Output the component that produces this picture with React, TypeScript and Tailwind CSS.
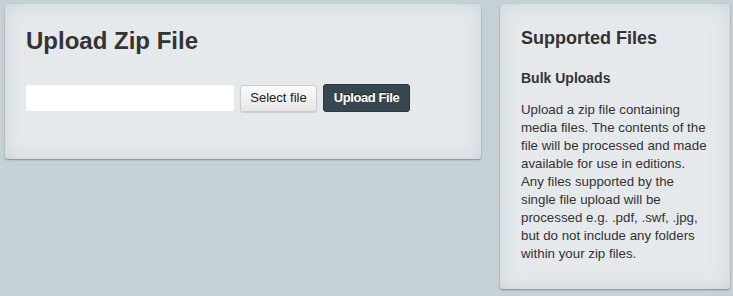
import React from "react";

export default function App() {
  const lines = [
    "Upload a zip file containing",
    "media files. The contents of the",
    "file will be processed and made",
    "available for use in editions.",
    "Any files supported by the",
    "single file upload will be",
    "processed e.g. .pdf, .swf, .jpg,",
    "but do not include any folders",
    "within your zip files.",
  ];
  return (
    <div
      className="w-[733px] h-[296px] bg-[#c5d0d7] flex items-start gap-[19px] pl-[5px] pt-[4px] text-[#333]"
      style={{ fontFamily: '"Liberation Sans", Arial, sans-serif' }}
    >
      <div className="w-[476px] h-[155px] rounded-[3px] bg-[#e5e9ec] shadow-[0_1px_2px_rgba(0,0,0,0.35),inset_0_0_18px_rgba(160,172,180,0.35)] pl-[21px] pt-[22px]">
        <h1 className="text-[24px] leading-[30px] font-bold">Upload Zip File</h1>
        <div className="flex items-center mt-[28px] gap-[6px]">
          <div className="w-[208px] h-[26px] bg-white rounded-[2px]" />
          <button className="w-[77px] h-[27px] rounded-[3px] border border-[#c9cccf] bg-gradient-to-b from-[#fbfbfb] to-[#e6e6e6] text-[13px] text-[#222] shadow-[0_1px_1px_rgba(0,0,0,0.12)]">
            Select file
          </button>
          <button className="w-[87px] h-[28px] rounded-[3px] bg-[#36474f] border border-[#2b3a41] text-[13px] text-white font-bold tracking-[-0.4px] [text-shadow:0_-1px_0_rgba(0,0,0,0.5)]">
            Upload File
          </button>
        </div>
      </div>
      <div className="w-[230px] h-[285px] rounded-[3px] bg-[#e5e9ec] shadow-[0_1px_2px_rgba(0,0,0,0.35),inset_0_0_18px_rgba(160,172,180,0.35)] pl-[21px] pr-[6px] pt-[23px]">
        <h2 className="text-[18px] leading-[22px] font-bold">Supported Files</h2>
        <h3 className="text-[14px] leading-[18px] font-bold mt-[20px]">Bulk Uploads</h3>
        <p className="text-[13.3px] leading-[18px] mt-[14px] whitespace-nowrap">
          {lines.map((l, i) => (
            <React.Fragment key={i}>
              {l}
              {i < lines.length - 1 && <br />}
            </React.Fragment>
          ))}
        </p>
      </div>
    </div>
  );
}
